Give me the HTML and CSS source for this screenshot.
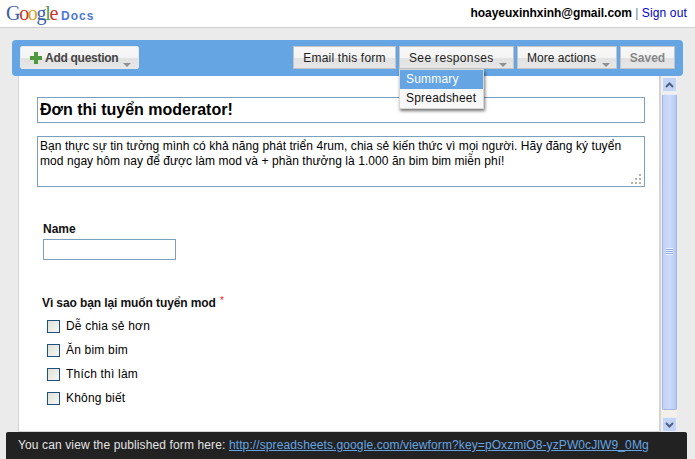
FILE: index.html
```html
<!DOCTYPE html>
<html>
<head>
<meta charset="utf-8">
<title>Google Docs</title>
<link rel="stylesheet" href="styles.css">
</head>
<body>
<header class="top">
  <div class="logo"><span class="g-b">G</span><span class="g-r">o</span><span class="g-y">o</span><span class="g-b">g</span><span class="g-g">l</span><span class="g-r">e</span><span class="logo-docs">Docs</span></div>
  <div class="account"><b>hoayeuxinhxinh@gmail.com</b> <span class="sep">|</span> <a href="#">Sign out</a></div>
</header>
<main class="page">
  <div class="toolbar">
    <button class="btn btn-add">
      <svg class="plus" width="12" height="12" viewBox="0 0 12 12"><path d="M4 0h4v4h4v4H8v4H4V8H0V4h4z" fill="#4e9a3a"/></svg>
      Add question<span class="caret caret-add"></span>
    </button>
    <div class="spacer"></div>
    <button class="btn btn-email">Email this form</button>
    <div class="menu-wrap">
      <button class="btn btn-see">See responses<span class="caret"></span></button>
      <div class="menu">
        <div class="menu-item active">Summary</div>
        <div class="menu-item">Spreadsheet</div>
      </div>
    </div>
    <button class="btn btn-more">More actions<span class="caret"></span></button>
    <button class="btn btn-saved">Saved</button>
  </div>
  <div class="body-row">
    <div class="sheet">
      <div class="title-box">Đơn thi tuyển moderator!</div>
      <div class="desc-box">Bạn thực sự tin tưởng mình có khả năng phát triển 4rum, chia sẻ kiến thức vì mọi người. Hãy đăng ký tuyển mod ngay hôm nay để được làm mod và + phần thưởng là 1.000 ăn bim bim miễn phí!
        <svg class="grip" width="11" height="11" viewBox="0 0 11 11" fill="#b8b4a4"><rect x="8" y="0" width="2" height="2"/><rect x="4" y="4" width="2" height="2"/><rect x="8" y="4" width="2" height="2"/><rect x="0" y="8" width="2" height="2"/><rect x="4" y="8" width="2" height="2"/><rect x="8" y="8" width="2" height="2"/></svg>
      </div>
      <label class="q-label q-name">Name</label>
      <div class="text-input"></div>
      <div class="q-label q-why">Vì sao bạn lại muốn tuyển mod <span class="req">*</span></div>
      <ul class="options">
        <li><span class="check"></span>Dễ chia sẻ hơn</li>
        <li><span class="check"></span>Ăn bim bim</li>
        <li><span class="check"></span>Thích thì làm</li>
        <li><span class="check"></span>Không biết</li>
      </ul>
    </div>
    <div class="scrollbar">
      <div class="sb-btn"><svg width="9" height="6" viewBox="0 0 9 6"><path d="M1 5l3.5-3.5L8 5" fill="none" stroke="#4d6185" stroke-width="2"/></svg></div>
      <div class="sb-thumb"><span class="sb-grip"></span></div>
      <div class="sb-btn"><svg width="9" height="6" viewBox="0 0 9 6"><path d="M1 1l3.5 3.5L8 1" fill="none" stroke="#4d6185" stroke-width="2"/></svg></div>
    </div>
  </div>
</main>
<div class="notice">You can view the published form here: <a href="#">http://spreadsheets.google.com/viewform?key=pOxzmiO8-yzPW0cJlW9_0Mg</a></div>
</body>
</html>
```
FILE: styles.css
```css
* { box-sizing: border-box; }
html, body { margin: 0; height: 459px; overflow: hidden; }
body {
  background: #ebebeb;
  font-family: "Liberation Sans", Arial, sans-serif;
  font-size: 12px;
  color: #000;
  position: relative;
}
.top {
  height: 28px;
  background: #fff;
  border-bottom: 1px solid #cfcfcf;
  display: flex;
  justify-content: space-between;
  align-items: flex-start;
  padding: 0 8px 0 6px;
}
.logo {
  font-family: "Liberation Serif", serif;
  font-size: 20px;
  line-height: 26px;
  letter-spacing: -1.3px;
  white-space: nowrap;
}
.g-b { color: #3a5fa8; }
.g-r { color: #c8362a; }
.g-y { color: #d6a21e; }
.g-g { color: #4d9a44; }
.logo-docs {
  font-family: "Liberation Sans", sans-serif;
  font-size: 12px;
  font-weight: bold;
  color: #4a78d0;
  letter-spacing: 1px;
  margin-left: 4px;
}
.account { font-size: 12px; line-height: 27px; white-space: nowrap; }
.account b { font-size: 12px; letter-spacing: -0.04px; }
.sep { color: #5f7f9f; }
.account a { color: #0000cc; text-decoration: none; letter-spacing: 0.15px; }
.page {
  padding: 12px 12px 0;
}
.toolbar {
  height: 36px;
  background: #65a5e4;
  border-radius: 4px;
  display: flex;
  align-items: flex-start;
  gap: 3px;
  padding: 6px 8px;
}
.spacer { flex: 1; }
.btn {
  height: 23px;
  padding: 0;
  border: 1px solid #c4c4c4;
  background: linear-gradient(#f8f8f8 0, #f4f4f4 50%, #e2e2e2 55%, #e6e6e6 100%);
  font-family: "Liberation Sans", Arial, sans-serif;
  font-size: 12px;
  color: #222;
  position: relative;
  white-space: nowrap;
  letter-spacing: 0.2px;
  display: block;
}
.btn-add {
  width: 119px;
  border-color: #e8e8e8;
  border-radius: 2px;
  font-weight: bold;
  color: #444;
  letter-spacing: -0.28px;
  text-align: left;
  padding-left: 24px;
}
.plus { position: absolute; left: 9px; top: 5px; }
.btn-email { width: 103px; }
.btn-see { width: 115px; text-align: left; padding-left: 9px; letter-spacing: 0.35px; }
.btn-more { width: 100px; text-align: left; padding-left: 9px; letter-spacing: 0.03px; }
.btn-saved { width: 55px; color: #888; font-weight: bold; letter-spacing: 0; }
.menu-wrap { position: relative; }
.caret {
  position: absolute;
  right: 6px;
  bottom: 1px;
  border: 4px solid transparent;
  border-top: 4px solid #8f8f8f;
  border-bottom: 0;
  width: 0;
  height: 0;
}
.caret-add { right: 7px; }
.menu {
  position: absolute;
  left: 0;
  top: 23px;
  width: 85px;
  background: #f8f8f8;
  border: 1px solid #d8d8d8;
  box-shadow: 1px 2px 3px rgba(0, 0, 0, 0.55);
  z-index: 5;
}
.menu-item {
  height: 19px;
  line-height: 19px;
  padding-left: 6px;
  letter-spacing: 0.2px;
  color: #111;
}
.menu-item.active { background: #65a5e4; color: #fff; }
.body-row {
  display: flex;
  margin: 0 6px 0 6px;
  height: 356px;
}
.sheet {
  width: 643px;
  background: #fff;
  border-left: 1px solid #d4d4d4;
  border-right: 2px solid #d4d4d4;
  border-bottom: 1px solid #d4d4d4;
  padding: 21px 14px 0 18px;
}
.title-box {
  height: 26px;
  border: 1px solid #7c9fbe;
  font-size: 16px;
  font-weight: bold;
  line-height: 24px;
  padding-left: 2px;
}
.desc-box {
  position: relative;
  height: 51px;
  margin-top: 13px;
  border: 1px solid #7c9fbe;
  font-size: 12px;
  line-height: 15px;
  padding: 2px 2px;
  letter-spacing: 0.06px;
}
.grip { position: absolute; right: 2px; bottom: 1px; }
.q-label { display: block; font-weight: bold; color: #111; line-height: 14px; }
.q-name { margin: 35px 0 0 6px; }
.text-input {
  width: 133px;
  height: 21px;
  margin: 3px 0 0 6px;
  border: 1px solid #7c9fbe;
  background: #fff;
}
.q-why { margin: 34px 0 0 5px; letter-spacing: -0.1px; }
.req { color: #e22; font-weight: normal; font-size: 10px; vertical-align: 3px; margin-left: 1px; }
.options { list-style: none; margin: 4px 0 0; padding: 0 0 0 10px; }
.options li {
  height: 24px;
  display: flex;
  align-items: center;
  letter-spacing: 0.2px;
}
.check {
  width: 13px;
  height: 13px;
  margin-right: 6px;
  border: 1px solid #1c5180;
  background: linear-gradient(135deg, #e0e0d8, #f8f8f4);
}
.scrollbar {
  width: 16px;
  height: 356px;
  display: flex;
  flex-direction: column;
  background: #f2f0e8;
  padding: 1px 0 0 1px;
}
.sb-btn {
  height: 15px;
  flex: none;
  background: #c4d4f4;
  border: 1px solid #e8eefc;
  border-radius: 2px;
  display: flex;
  align-items: center;
  justify-content: center;
}
.sb-thumb {
  height: 316px;
  flex: none;
  background: linear-gradient(90deg, #c2d2f6, #cddbfa 50%, #b6c8f4);
  border: 1px solid #9fb6e2;
  border-top-color: #e6ecfa;
  border-radius: 2px;
  position: relative;
  margin: 2px 0 7px;
}
.sb-grip {
  position: absolute;
  left: 3px;
  top: 153px;
  width: 7px;
  height: 7px;
  background: repeating-linear-gradient(#eef3ff 0, #eef3ff 1px, #8fa9e8 1px, #8fa9e8 2px);
}
.notice {
  position: absolute;
  left: 6px;
  top: 432px;
  width: 681px;
  height: 27px;
  background: #222;
  border-radius: 2px 2px 0 0;
  color: #e4e4e4;
  font-size: 12px;
  line-height: 27px;
  padding-left: 12px;
  letter-spacing: 0.12px;
  white-space: nowrap;
  overflow: hidden;
}
.notice a { color: #65a5e4; letter-spacing: 0.11px; }
```
